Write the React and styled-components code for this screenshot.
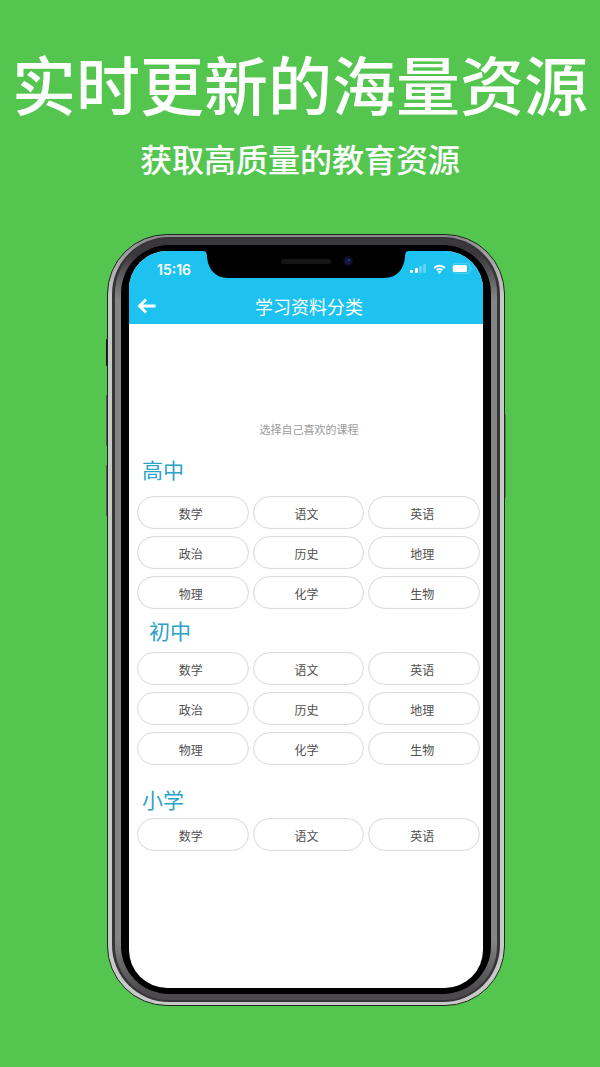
import React from 'react'
import styled, { createGlobalStyle } from 'styled-components'

const GlobalStyle = createGlobalStyle`
  body {
    margin: 0;
    background: #54c64f;
    font-family: "Noto Sans CJK SC", "Noto Sans", sans-serif;
  }
  * {
    box-sizing: border-box;
  }
`

const Page = styled.main`
  min-height: 100vh;
  padding-bottom: 62px;
  background: #54c64f;
`

const Hero = styled.header`
  padding-top: 42px;
  color: white;
  text-align: center;
  white-space: nowrap;
`

const Headline = styled.h1`
  margin: 0;
  font-size: 64px;
  font-weight: 500;
  line-height: 80px;
`

const Tagline = styled.p`
  margin: 14px 0 0;
  font-size: 32px;
  font-weight: 500;
  line-height: 44px;
`

const Phone = styled.div`
  position: relative;
  margin: 54px 95px 0 107px;
`

const SideKey = styled.span`
  position: absolute;
  top: ${props => props.$top}px;
  ${props => props.$side}: -1px;
  width: 2px;
  height: ${props => props.$length}px;
  border-radius: 1px;
  background: ${props => props.$color};
`

const Rim = styled.div`
  position: relative;
  border: 1px solid #1f261f;
  border-radius: 60px;
  padding: 2px 4px 3px;
  background: linear-gradient(#8b8a8c, #c6c9c5 60px);
`

const Edge = styled.div`
  border-radius: 57px;
  padding: 2px 3px;
  background: #37343a;
`

const Metal = styled.div`
  border-radius: 54px;
  padding: 6px;
  background: linear-gradient(#3b383c 0, #3b383c 16px, #858484 60px, #858484 calc(100% - 60px), #4c4a4d calc(100% - 10px));
`

const Bezel = styled.div`
  border-radius: 48px;
  padding: 6px 8px;
  background: black;
`

const Screen = styled.div`
  position: relative;
  overflow: hidden;
  border-radius: 38px;
  padding-bottom: 137px;
  background: white;
`

const Notch = styled.svg`
  position: absolute;
  top: 0;
  left: 50%;
  width: 206px;
  height: 27px;
  transform: translateX(-50%);
`

const AppHeader = styled.header`
  background: #1dc2f1;
  color: white;
`

const StatusBar = styled.div`
  display: flex;
  align-items: center;
  justify-content: space-between;
  height: 36px;
  padding: 0 9px 0 28px;
`

const Time = styled.time`
  font-family: Inter, sans-serif;
  font-size: 14px;
  font-weight: 600;
`

const NavBar = styled.div`
  display: flex;
  align-items: center;
  height: 37px;
  padding-right: 24px;
`

const BackButton = styled.button`
  display: flex;
  width: 30px;
  border: none;
  padding: 0 0 0 8px;
  background: none;
  color: white;
`

const NavTitle = styled.h2`
  flex: 1;
  margin: 0;
  font-size: 18px;
  font-weight: 400;
  line-height: 28px;
  text-align: center;
`

const Hint = styled.p`
  margin: 95px 0 16px;
  padding-left: 6px;
  color: #9a9a9a;
  font-size: 11px;
  line-height: 20px;
  text-align: center;
`

const Level = styled.section`
  padding: 0 3px 0 8px;
  margin-top: ${props => props.$space}px;
`

const LevelTitle = styled.h3`
  margin: 0 0 ${props => props.$gap}px;
  padding-left: ${props => (props.$indent ? 12 : 5)}px;
  color: #2ba3c6;
  font-size: 21px;
  font-weight: 400;
  line-height: 28px;
`

const Subjects = styled.div`
  display: grid;
  grid-template-columns: repeat(3, 1fr);
  gap: 7px 4px;
`

const Subject = styled.button`
  height: 33px;
  border: 1px solid #dcdcdc;
  border-radius: 17px;
  padding: 2px 4px 0 0;
  background: white;
  box-shadow: inset 0 0 1px #d0d0d0;
  color: #505050;
  font-family: inherit;
  font-size: 12px;
  line-height: 18px;
`

const levels = [
  {
    name: '高中',
    space: 0,
    gap: 13,
    subjects: ['数学', '语文', '英语', '政治', '历史', '地理', '物理', '化学', '生物'],
  },
  {
    name: '初中',
    space: 7,
    gap: 8,
    indent: true,
    subjects: ['数学', '语文', '英语', '政治', '历史', '地理', '物理', '化学', '生物'],
  },
  {
    name: '小学',
    space: 20,
    gap: 5,
    subjects: ['数学', '语文', '英语'],
  },
]

const StatusIcons = () => (
  <svg width="64" height="12" viewBox="0 0 64 12" fill="white">
    <rect x="0" y="7" width="3" height="3" rx="1" />
    <rect x="5" y="5" width="3" height="5" rx="1" />
    <rect x="9" y="3" width="3" height="7" rx="1" opacity="0.3" />
    <rect x="13" y="1" width="3" height="9" rx="1" opacity="0.3" />
    <g fill="none" stroke="white" strokeWidth="1.7">
      <path d="M24 5 Q29.500 0.500 35 5" />
      <path d="M26.500 7.200 Q29.500 4.800 32.500 7.200" />
    </g>
    <path d="M27.500 8.600 Q29.500 7.200 31.500 8.600 L29.500 11 Z" />
    <rect x="42.500" y="0.700" width="17.500" height="9.600" rx="2.500" fill="none" stroke="white" opacity="0.25" />
    <rect x="43" y="2" width="14" height="7" rx="1.500" />
    <path d="M61 4 q2 1.500 0 3 z" opacity="0.3" />
  </svg>
)

const App = () => (
  <Page>
    <GlobalStyle />
    <Hero>
      <Headline>实时更新的海量资源</Headline>
      <Tagline>获取高质量的教育资源</Tagline>
    </Hero>
    <Phone>
      <SideKey $side="left" $top={105} $length={27} $color="#101510" />
      <SideKey $side="left" $top={161} $length={51} $color="#4c5c4a" />
      <SideKey $side="left" $top={231} $length={51} $color="#4c5c4a" />
      <SideKey $side="right" $top={180} $length={84} $color="#66705f" />
      <Rim>
        <Edge>
          <Metal>
            <Bezel>
              <Screen>
                <AppHeader>
                  <StatusBar>
                    <Time>15:16</Time>
                    <StatusIcons />
                  </StatusBar>
                  <NavBar>
                    <BackButton aria-label="返回">
                      <svg width="20" height="16" viewBox="0 0 20 16" fill="none" stroke="currentColor" strokeWidth="2.800">
                        <path d="M18.500 8 H3 M9 1.500 L2.500 8 L9 14.500" />
                      </svg>
                    </BackButton>
                    <NavTitle>学习资料分类</NavTitle>
                  </NavBar>
                </AppHeader>
                <Notch viewBox="0 0 206 27">
                  <path d="M0 0 C3 0 4 2 4 6 C5 18 12 27 25 27 H181 C194 27 201 18 202 6 C202 2 203 0 206 0 Z" />
                  <rect x="78" y="8" width="50" height="5" rx="2.500" fill="#161616" />
                  <circle cx="145" cy="10" r="5" fill="#0b0d1c" />
                  <circle cx="145" cy="10" r="3" fill="#101a44" />
                  <circle cx="146" cy="9" r="1" fill="#2c4288" />
                </Notch>
                <Hint>选择自己喜欢的课程</Hint>
                {levels.map(level => (
                  <Level key={level.name} $space={level.space}>
                    <LevelTitle $gap={level.gap} $indent={level.indent}>{level.name}</LevelTitle>
                    <Subjects>
                      {level.subjects.map(subject => (
                        <Subject key={subject}>{subject}</Subject>
                      ))}
                    </Subjects>
                  </Level>
                ))}
              </Screen>
            </Bezel>
          </Metal>
        </Edge>
      </Rim>
    </Phone>
  </Page>
)

export default App
